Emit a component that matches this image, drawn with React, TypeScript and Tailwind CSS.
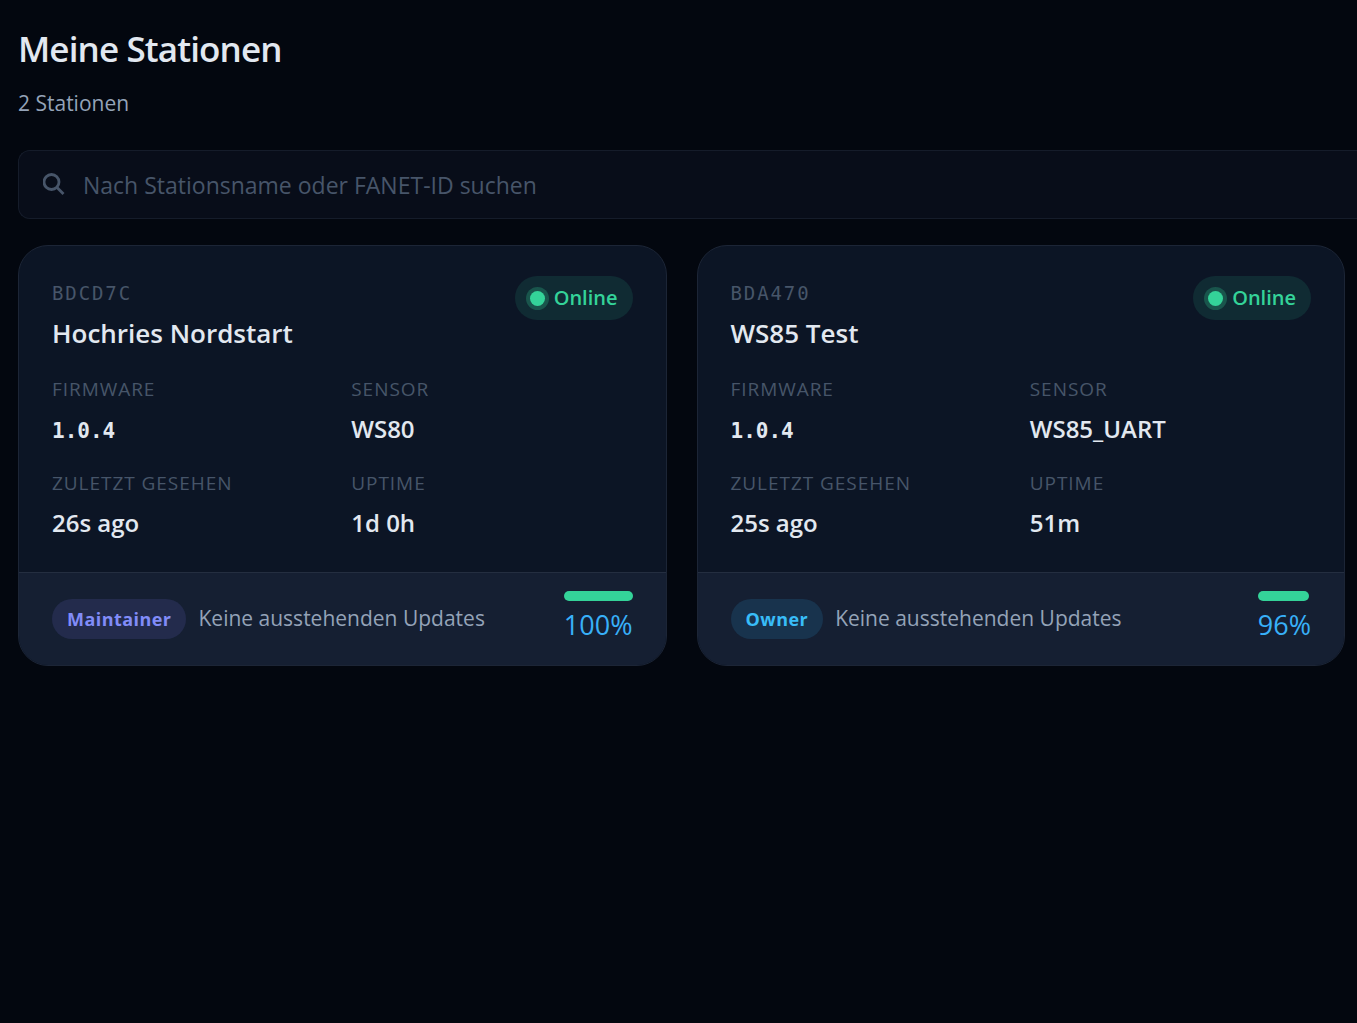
interface Station {
    id: string;
    name: string;
    firmware: string;
    sensor: string;
    lastSeen: string;
    uptime: string;
    role: "Maintainer" | "Owner";
    battery: number;
}

const stations: Station[] = [
    {
        id: "BDCD7C",
        name: "Hochries Nordstart",
        firmware: "1.0.4",
        sensor: "WS80",
        lastSeen: "26s ago",
        uptime: "1d 0h",
        role: "Maintainer",
        battery: 100
    },
    {
        id: "BDA470",
        name: "WS85 Test",
        firmware: "1.0.4",
        sensor: "WS85_UART",
        lastSeen: "25s ago",
        uptime: "51m",
        role: "Owner",
        battery: 96
    }
];

const roleStyles = {
    Maintainer: "bg-[#232b4c] text-[#818cf8]",
    Owner: "bg-[#18334d] text-[#38bdf8]"
};

interface FieldProps {
    label: string;
    value: string;
    mono?: boolean;
}

function Field({ label, value, mono }: FieldProps) {
    return (
        <div>
            <dt className="text-[19px] leading-6 tracking-wider uppercase text-[#475569]">{label}</dt>
            <dd className="mt-3 text-[24px] leading-8 font-semibold text-[#e2e8f0]">
                {mono
                    ? <span className="font-['DejaVu_Sans_Mono',monospace] text-[21px] leading-none font-bold">{value}</span>
                    : value}
            </dd>
        </div>
    );
}

function StationCard({ station }: { station: Station }) {
    return (
        <article className="overflow-hidden rounded-[30px] border border-[#1c2536] bg-[#0c1525]">
            <div className="px-[33px] pt-[30px] pb-[33px]">
                <div className="flex items-start justify-between">
                    <div className="pt-[5px]">
                        <p className="font-['DejaVu_Sans_Mono',monospace] text-[19px] leading-6 tracking-widest text-[#475569]">
                            {station.id}
                        </p>
                        <h2 className="mt-2 text-[26px] leading-10 font-semibold text-[#e2e8f0]">{station.name}</h2>
                    </div>
                    <span className="flex h-11 items-center gap-[9px] rounded-full bg-[#102b33] px-[15px] text-[20px] font-semibold text-[#34d399]">
                        <span className="size-[15px] rounded-full bg-[#34d399] ring-4 ring-[#34d399]/25" />
                        Online
                    </span>
                </div>
                <dl className="mt-6 grid grid-cols-2 gap-x-[18px] gap-y-[26px]">
                    <Field label="Firmware" value={station.firmware} mono />
                    <Field label="Sensor" value={station.sensor} />
                    <Field label="Zuletzt gesehen" value={station.lastSeen} />
                    <Field label="Uptime" value={station.uptime} />
                </dl>
            </div>
            <div className="flex h-[93px] items-center justify-between border-t border-[#242e40] bg-[#151f32] px-[33px]">
                <div className="flex items-center gap-3">
                    <span className={`flex h-10 items-center rounded-full px-[15px] text-[18px] font-bold tracking-wide ${roleStyles[station.role]}`}>
                        {station.role}
                    </span>
                    <span className="text-[21px] text-[#94a3b8]">Keine ausstehenden Updates</span>
                </div>
                <div className="pb-0.5">
                    <div className="h-[10px] rounded-full bg-[#34d399]" style={{ width: `${station.battery}%` }} />
                    <p className="mt-1 text-[27px] leading-10 text-[#38b0f8]">{station.battery}%</p>
                </div>
            </div>
        </article>
    );
}

function App() {
    return (
        <main className="min-h-screen overflow-hidden bg-[#03070f] pt-[25px] pr-3 pb-8 pl-[18px] font-['Open_Sans',sans-serif]">
            <h1 className="text-[35px] leading-[48px] font-semibold tracking-tight text-[#e2e8f0]">Meine Stationen</h1>
            <p className="mt-[14px] text-[21px] leading-8 text-[#94a3b8]">2 Stationen</p>

            {/* the search field runs off the right edge */}
            <label className="mt-[31px] -mr-3 flex h-[69px] items-center gap-4 rounded-l-xl border border-r-0 border-[#151c2a] bg-[#080d19] pl-6 text-[#475569]">
                <svg className="size-6 shrink-0" viewBox="0 0 24 24" fill="none" stroke="currentColor" strokeWidth="2.8" aria-hidden="true">
                    <circle cx="8.5" cy="9" r="7.5" />
                    <path d="M14 14.5L20.5 21" />
                </svg>
                <input
                    type="search"
                    aria-label="Stationen suchen"
                    placeholder="Nach Stationsname oder FANET-ID suchen"
                    className="w-full bg-transparent pt-0.5 text-[23px] text-[#e2e8f0] outline-none placeholder:text-[#475569]"
                />
            </label>

            <div className="mt-[26px] grid grid-cols-2 gap-[30px]">
                {stations.map((station) => (
                    <StationCard key={station.id} station={station} />
                ))}
            </div>
        </main>
    );
}

export default App;
